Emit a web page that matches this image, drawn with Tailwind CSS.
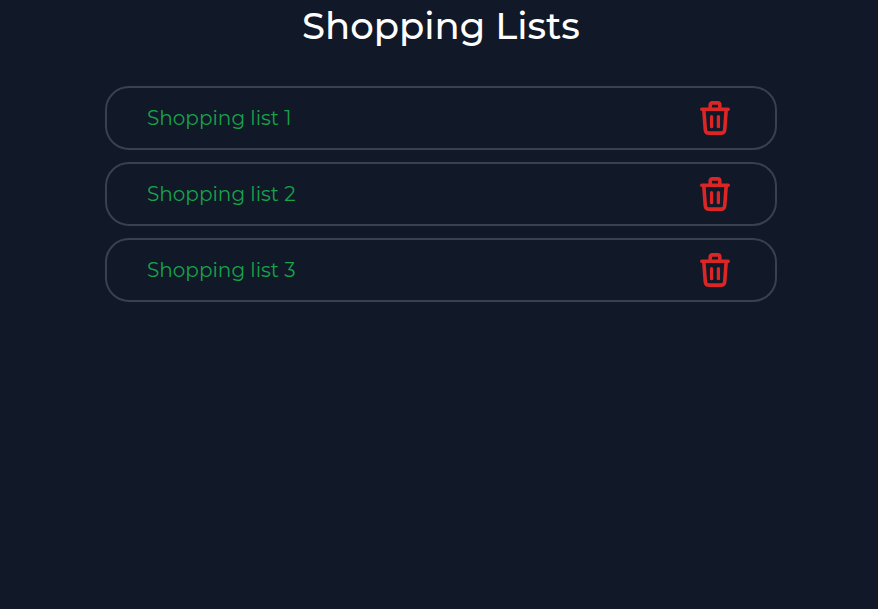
<!DOCTYPE html>
<html lang="en"><head><meta charset="utf-8"><title>Shopping Lists</title>
<script src="https://cdn.jsdelivr.net/npm/@tailwindcss/browser@4"></script></head>
<body class="min-h-screen bg-[#111827] pl-1 font-['Montserrat','Open_Sans',sans-serif]">
<svg class="hidden"><symbol id="trash" viewBox="0 0 30 34"><g fill="none" stroke="currentColor" stroke-width="3.6" stroke-linecap="round" stroke-linejoin="round"><path d="M1.8 8.3H28.2M3.8 8.6l1.5 20.2Q5.6 32.1 9 32.1H21Q24.4 32.1 24.7 28.8L26.2 8.6M10.2 7.8V4Q10.2 1.9 12.2 1.9H17.8Q19.8 1.9 19.8 4V7.8"/><path stroke-width="3.3" d="M11.6 15.7V25.7M18.4 15.7V25.7"/></g></symbol></svg>
<main class="mx-auto w-[672px]">
<h1 class="flex h-[52px] items-center justify-center text-[37px] font-medium text-white"><span class="whitespace-nowrap">Shopping Lists</span></h1>
<ul class="mt-[34px] flex flex-col gap-3">
<li class="flex h-16 items-center justify-between rounded-3xl border-2 border-[#374151] pr-[45px] pl-10 text-xl text-[#16a34a]"><span>Shopping list 1</span><svg class="h-[34px] w-[30px] text-[#dc2626]"><use href="#trash"/></svg></li>
<li class="flex h-16 items-center justify-between rounded-3xl border-2 border-[#374151] pr-[45px] pl-10 text-xl text-[#16a34a]"><span>Shopping list 2</span><svg class="h-[34px] w-[30px] text-[#dc2626]"><use href="#trash"/></svg></li>
<li class="flex h-16 items-center justify-between rounded-3xl border-2 border-[#374151] pr-[45px] pl-10 text-xl text-[#16a34a]"><span>Shopping list 3</span><svg class="h-[34px] w-[30px] text-[#dc2626]"><use href="#trash"/></svg></li>
</ul></main></body></html>
